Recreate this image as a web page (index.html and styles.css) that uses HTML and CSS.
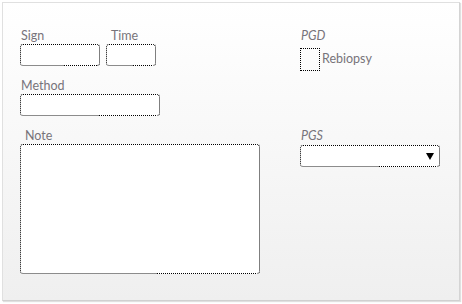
FILE: index.html
```html
<!DOCTYPE html>
<html lang="en">
<head>
  <meta charset="UTF-8">
  <title>Biopsy</title>
  <link rel="stylesheet" href="styles.css">
</head>
<body>

  <div class="panel">
    <div class="col-left">
      <div class="row">
        <div class="group">
          <div class="label">Sign</div>
          <div class="field sign"></div>
        </div>
        <div class="group">
          <div class="label indent">Time</div>
          <div class="field time"></div>
        </div>
      </div>
      <div class="group method-group">
        <div class="label">Method</div>
        <div class="field method"></div>
      </div>
    </div>

    <div class="col-right">
      <div class="label italic">PGD</div>
      <div class="check-row">
        <div class="field check"></div>
        <span class="check-text">Rebiopsy</span>
      </div>
    </div>

    <div class="col-left">
      <div class="label indent">Note</div>
      <div class="field note"></div>
    </div>

    <div class="col-right">
      <div class="label italic">PGS</div>
      <div class="field select">
        <svg class="arrow" width="8" height="7" viewBox="0 0 8 7"><path d="M0 0H8L4 7Z" fill="#000"/></svg>
      </div>
    </div>
  </div>

</body>
</html>
```

FILE: styles.css
```css
/* Reset styling */
* {
  margin: 0;
  padding: 0;
  box-sizing: border-box;
}

body {
  font-family: Lato, "Open Sans", sans-serif;
  font-size: 12.5px;
  background: #ffffff;
  width: 462px;
  height: 304px;
  overflow: hidden;
}

.panel {
  margin: 2px 0 0 2px;
  width: 458px;
  height: 299px;
  padding: 25px 0 0 17px;
  border: 1px solid #e0e0e0;
  border-right-color: #d4d4d4;
  border-bottom-color: #d0d0d0;
  box-shadow: 1px 1px 1px rgba(0, 0, 0, 0.12);
  background: linear-gradient(180deg, #ffffff 0%, #f8f8f8 45%, #efefef 100%);
  display: grid;
  grid-template-columns: 280px 1fr;
  grid-template-rows: auto auto;
  row-gap: 12px;
  align-items: start;
  align-content: start;
}

.row {
  display: flex;
  gap: 6px;
}

.label {
  height: 16px;
  line-height: 16px;
  color: #77737a;
  padding-left: 1px;
}

.indent {
  padding-left: 5px;
}

.italic {
  font-style: italic;
}

.method-group {
  margin-top: 12px;
}

/* Dotted focus-like boxes with a grey underline on the left part */
.field {
  position: relative;
  background: #ffffff;
  border: 1px dotted #000;
  border-bottom: 1px solid #8c8c8c;
  border-radius: 3px;
  height: 22px;
}

.field::after {
  content: "";
  position: absolute;
  right: 2px;
  bottom: -1px;
  width: 42%;
  height: 1px;
  background: repeating-linear-gradient(90deg, #000 0 1px, #ffffff 1px 2px);
}

.sign {
  width: 80px;
}

.time {
  width: 50px;
}

.method {
  width: 140px;
}

.note {
  width: 240px;
  height: 130px;
}

.check-row {
  display: flex;
  align-items: center;
  gap: 2px;
  margin-top: 4px;
}

.check {
  width: 20px;
  height: 23px;
  border-radius: 0;
  border-bottom: 1px dotted #000;
  background: transparent;
}

.check::after {
  display: none;
}

.check-text {
  color: #77737a;
  padding-bottom: 2px;
}

.select {
  width: 140px;
  height: 22px;
  margin-top: 1px;
  display: flex;
  align-items: center;
  justify-content: flex-end;
  padding-right: 5px;
}

.arrow {
  display: block;
}
```
